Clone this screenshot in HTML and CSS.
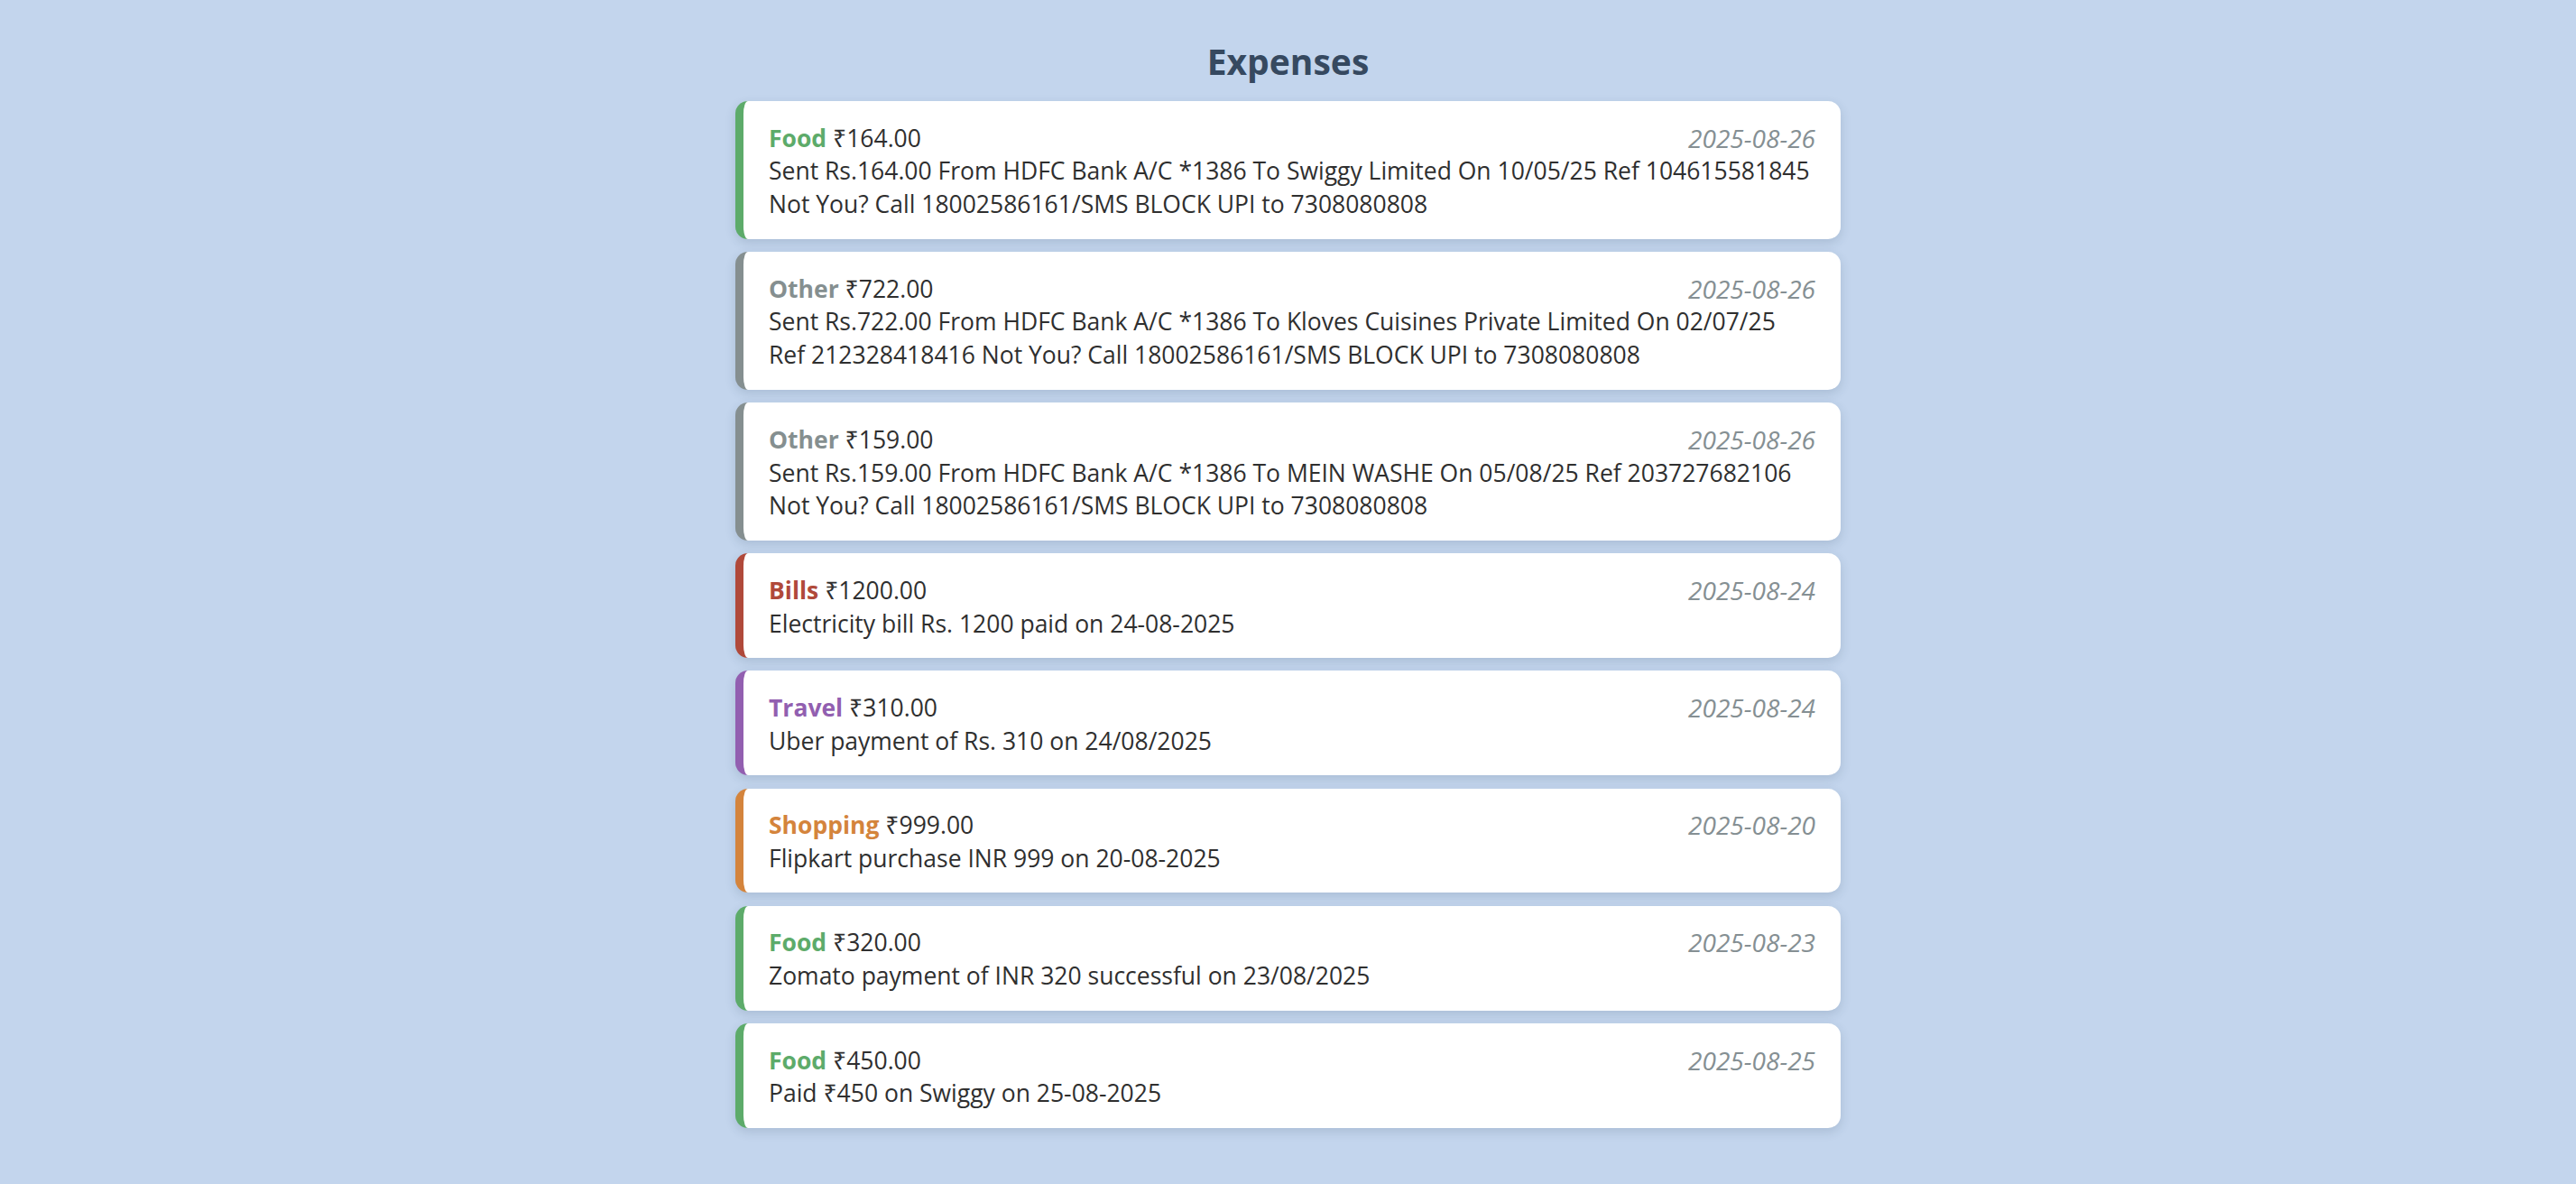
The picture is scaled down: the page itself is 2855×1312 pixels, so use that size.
FILE: index.html
```html
<!DOCTYPE html>
<html lang="en">
<head>
<meta charset="utf-8">
<title>Expenses</title>
<link rel="stylesheet" href="styles.css">
</head>
<body>
<main class="page">
  <h2 class="title">Expenses</h2>
  <ul class="list">
    <li class="card cat-food">
      <div class="head"><span><b class="cat">Food</b> ₹164.00</span><span class="date">2025-08-26</span></div>
      <div class="desc">Sent Rs.164.00 From HDFC Bank A/C *1386 To Swiggy Limited On 10/05/25 Ref 104615581845 Not You? Call 18002586161/SMS BLOCK UPI to 7308080808</div>
    </li>
    <li class="card cat-other">
      <div class="head"><span><b class="cat">Other</b> ₹722.00</span><span class="date">2025-08-26</span></div>
      <div class="desc">Sent Rs.722.00 From HDFC Bank A/C *1386 To Kloves Cuisines Private Limited On 02/07/25 Ref 212328418416 Not You? Call 18002586161/SMS BLOCK UPI to 7308080808</div>
    </li>
    <li class="card cat-other">
      <div class="head"><span><b class="cat">Other</b> ₹159.00</span><span class="date">2025-08-26</span></div>
      <div class="desc">Sent Rs.159.00 From HDFC Bank A/C *1386 To MEIN WASHE On 05/08/25 Ref 203727682106 Not You? Call 18002586161/SMS BLOCK UPI to 7308080808</div>
    </li>
    <li class="card cat-bills">
      <div class="head"><span><b class="cat">Bills</b> ₹1200.00</span><span class="date">2025-08-24</span></div>
      <div class="desc">Electricity bill Rs. 1200 paid on 24-08-2025</div>
    </li>
    <li class="card cat-travel">
      <div class="head"><span><b class="cat">Travel</b> ₹310.00</span><span class="date">2025-08-24</span></div>
      <div class="desc">Uber payment of Rs. 310 on 24/08/2025</div>
    </li>
    <li class="card cat-shopping">
      <div class="head"><span><b class="cat">Shopping</b> ₹999.00</span><span class="date">2025-08-20</span></div>
      <div class="desc">Flipkart purchase INR 999 on 20-08-2025</div>
    </li>
    <li class="card cat-food">
      <div class="head"><span><b class="cat">Food</b> ₹320.00</span><span class="date">2025-08-23</span></div>
      <div class="desc">Zomato payment of INR 320 successful on 23/08/2025</div>
    </li>
    <li class="card cat-food">
      <div class="head"><span><b class="cat">Food</b> ₹450.00</span><span class="date">2025-08-25</span></div>
      <div class="desc">Paid ₹450 on Swiggy on 25-08-2025</div>
    </li>
  </ul>
</main>
</body>
</html>
```
FILE: styles.css
```css
html, body {
  margin: 0;
  padding: 0;
}
body {
  background: #c3d5ed;
  font-family: "Open Sans", "Noto Sans", sans-serif;
  font-size: 26.5px;
  line-height: 36.9px;
  color: #2f2f2f;
}
.page {
  padding: 40px 0 60px;
}
.title {
  margin: 0 0 16px;
  text-align: center;
  font-size: 39px;
  line-height: 56px;
  font-weight: 700;
  color: #364960;
}
.list {
  list-style: none;
  margin: 0 auto;
  padding: 0;
  max-width: 1225px;
  display: flex;
  flex-direction: column;
  gap: 14.4px;
}
.card {
  background: #fff;
  border-left: 9px solid #858f90;
  border-radius: 14px;
  padding: 22.5px 28px 19.5px;
  box-shadow: 0 4px 12px rgba(40, 60, 90, 0.16);
}
.head {
  display: flex;
  justify-content: space-between;
  align-items: center;
  height: 36.9px;
}
.cat {
  font-weight: 700;
}
.date {
  font-size: 28px;
  line-height: 36.9px;
  font-style: italic;
  color: #858f93;
}
.cat-food { border-left-color: #5dab6a; }
.cat-food .cat { color: #5dab6a; }
.cat-other { border-left-color: #858f90; }
.cat-other .cat { color: #858f90; }
.cat-bills { border-left-color: #b0493a; }
.cat-bills .cat { color: #b0493a; }
.cat-travel { border-left-color: #925fb0; }
.cat-travel .cat { color: #925fb0; }
.cat-shopping { border-left-color: #d4843c; }
.cat-shopping .cat { color: #d4843c; }
```
